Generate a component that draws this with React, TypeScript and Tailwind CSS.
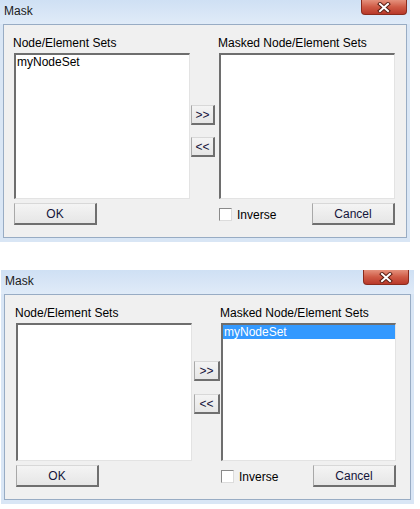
import React from 'react';

interface DialogProps {
  shiftClass: string;
  widthClass: string;
  titlePadRightClass: string;
  padLeftClass: string;
  padRightClass: string;
  listHeightClass: string;
  moveTopClass: string;
  moveWidthClass: string;
  moveGapClass: string;
  rightListWidthClass: string;
  leftItems: string[];
  rightItems: string[];
}

function CloseButton() {
  return (
    <div className="w-[46px] h-[15px] shrink-0 rounded-b-[4px] border border-t-0 border-[#8a2b1c] bg-gradient-to-b from-[#e4907c] via-[#cf5a45] to-[#b8382a] flex items-center justify-center">
      <svg width="14" height="11" viewBox="0 0 14 11">
        <path d="M3 2 L11 9 M11 2 L3 9" stroke="#5a1e14" strokeWidth="4" strokeLinecap="square" />
        <path d="M3 2 L11 9 M11 2 L3 9" stroke="#ffffff" strokeWidth="2" strokeLinecap="square" />
      </svg>
    </div>
  );
}

function ListBox({ items, selected, widthClass, heightClass }: { items: string[]; selected?: boolean; widthClass: string; heightClass: string }) {
  return (
    <div className={`${widthClass} ${heightClass} shrink-0 bg-white border-t-2 border-l-2 border-r border-b border-t-[#6e6e6e] border-l-[#6e6e6e] border-r-[#e3e3e3] border-b-[#e3e3e3]`}>
      {items.map((it) => (
        <div
          key={it}
          className={`h-[14px] leading-[14px] pl-px text-[12px] ${selected ? 'bg-[#3399ff] text-white' : 'text-black'}`}
        >
          {it}
        </div>
      ))}
    </div>
  );
}

function WinButton({ label, widthClass, heightClass }: { label: string; widthClass: string; heightClass: string }) {
  return (
    <div
      className={`${widthClass} ${heightClass} shrink-0 flex items-center justify-center bg-gradient-to-b from-[#f4f4f4] to-[#e6e6e6] border-t border-l border-t-[#d8d8d8] border-l-[#a8a8a8] border-r-2 border-b-2 border-r-[#6f6f6f] border-b-[#6f6f6f] text-[12px] text-[#14143a]`}
    >
      {label}
    </div>
  );
}

function Dialog(p: DialogProps) {
  return (
    <div className={`${p.shiftClass} ${p.widthClass} bg-[#d9e6f5]`}>
      {/* title bar */}
      <div className={`h-[24px] flex items-start justify-between bg-gradient-to-b from-[#cfe0f4] to-[#e0ebf8] pl-[4px] ${p.titlePadRightClass}`}>
        <span className="mt-[4px] text-[12px] leading-[14px] text-[#1b1b1b]">Mask</span>
        <CloseButton />
      </div>
      {/* frame + client */}
      <div className="px-[3px] pb-[4px]">
        <div className={`border border-[#98acc4] bg-[#f0f0f0] pt-[11px] pb-[12px] ${p.padLeftClass} ${p.padRightClass}`}>
          <div className="flex">
            <div className="flex flex-col shrink-0">
              <div className="h-[14px] leading-[14px] text-[12px] text-black -ml-px mb-[3px]">Node/Element Sets</div>
              <ListBox items={p.leftItems} widthClass="w-[176px]" heightClass={p.listHeightClass} />
            </div>
            <div className={`w-[29px] shrink-0 flex flex-col ${p.moveTopClass} ${p.moveGapClass}`}>
              <WinButton label=">>" widthClass={p.moveWidthClass} heightClass="h-[20px]" />
              <WinButton label="<<" widthClass={p.moveWidthClass} heightClass="h-[20px]" />
            </div>
            <div className="flex flex-col shrink-0">
              <div className="h-[14px] leading-[14px] text-[12px] text-black -ml-px mb-[3px]">Masked Node/Element Sets</div>
              <ListBox items={p.rightItems} selected widthClass={p.rightListWidthClass} heightClass={p.listHeightClass} />
            </div>
          </div>
          <div className="flex mt-[4px]">
            <div className="w-[176px] shrink-0">
              <WinButton label="OK" widthClass="w-[83px]" heightClass="h-[22px]" />
            </div>
            <div className="w-[29px] shrink-0" />
            <div className={`${p.rightListWidthClass} shrink-0 flex items-center justify-between -mr-[2px]`}>
              <div className="flex items-center gap-[5px] pt-[1px]">
                <div className="w-[13px] h-[13px] bg-white border-t border-l border-t-[#8a8a8a] border-l-[#8a8a8a] border-r border-b border-r-[#dcdcdc] border-b-[#dcdcdc]" />
                <span className="text-[12px] text-black leading-[14px]">Inverse</span>
              </div>
              <WinButton label="Cancel" widthClass="w-[83px]" heightClass="h-[22px]" />
            </div>
          </div>
        </div>
      </div>
    </div>
  );
}

export default function App() {
  return (
    <div className="w-[420px] h-[509px] bg-white overflow-hidden" style={{ fontFamily: '"Liberation Sans", Arial, sans-serif' }}>
      <Dialog
        shiftClass="ml-0"
        widthClass="w-[410px]"
        titlePadRightClass="pr-[3px]"
        padLeftClass="pl-[10px]"
        padRightClass="pr-[11px]"
        listHeightClass="h-[146px]"
        moveTopClass="pt-[69px] pl-px"
        moveWidthClass="w-[24px]"
        moveGapClass="gap-[12px]"
        rightListWidthClass="w-[176px]"
        leftItems={['myNodeSet']}
        rightItems={[]}
      />
      <div className="h-[28px]" />
      <Dialog
        shiftClass="ml-px"
        widthClass="w-[413px]"
        titlePadRightClass="pr-[5px]"
        padLeftClass="pl-[11px]"
        padRightClass="pr-[14px]"
        listHeightClass="h-[138px]"
        moveTopClass="pt-[55px] pl-[2px]"
        moveWidthClass="w-[26px]"
        moveGapClass="gap-[13px]"
        rightListWidthClass="w-[175px]"
        leftItems={[]}
        rightItems={['myNodeSet']}
      />
    </div>
  );
}
